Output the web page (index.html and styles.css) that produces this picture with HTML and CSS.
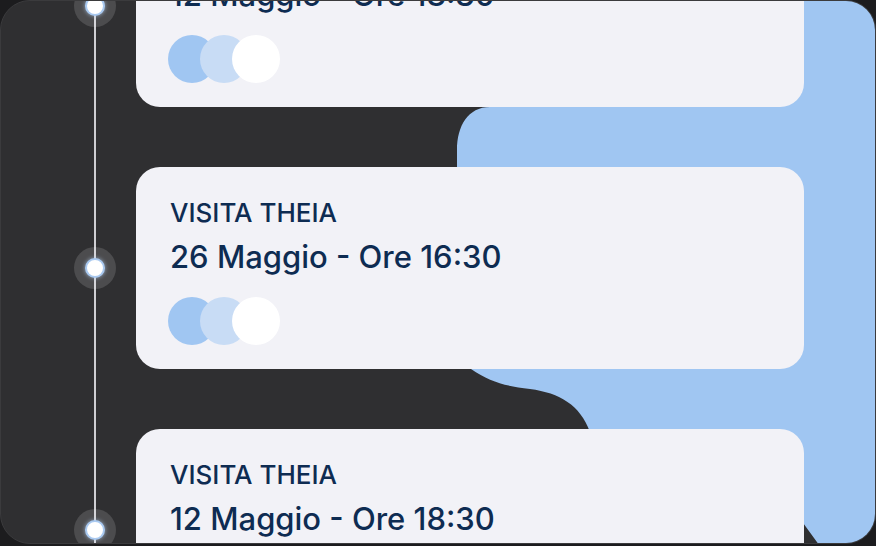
FILE: index.html
```
<!DOCTYPE html>
<html>
<head>
    <title>Visite</title>
    <link rel="stylesheet" href="styles.css">
</head>
<body>
    <div class="panel">
        <svg class="blob" width="876" height="546" viewBox="0 0 876 546">
            <path d="M600 -10 L890 -10 L890 560 L830 560 L790 505 L600 440 L590 432 C580 405 560 393 530 389 C505 386 490 382 471 369 L457 350 L457 150 C457 126 468 107 490 107 L500 100 Z" fill="#a0c6f2"/>
        </svg>
        <div class="timeline">
            <div class="row">
                <div class="rail"><span class="halo"><span class="dot"></span></span></div>
                <div class="card">
                    <div class="card-title">VISITA THEIA</div>
                    <div class="card-date">12 Maggio - Ore 18:30</div>
                    <div class="people">
                        <span class="person p1"></span>
                        <span class="person p2"></span>
                        <span class="person p3"></span>
                    </div>
                </div>
            </div>
            <div class="row">
                <div class="rail"><span class="halo"><span class="dot"></span></span></div>
                <div class="card">
                    <div class="card-title">VISITA THEIA</div>
                    <div class="card-date">26 Maggio - Ore 16:30</div>
                    <div class="people">
                        <span class="person p1"></span>
                        <span class="person p2"></span>
                        <span class="person p3"></span>
                    </div>
                </div>
            </div>
            <div class="row">
                <div class="rail"><span class="halo"><span class="dot"></span></span></div>
                <div class="card">
                    <div class="card-title">VISITA THEIA</div>
                    <div class="card-date">12 Maggio - Ore 18:30</div>
                    <div class="people">
                        <span class="person p1"></span>
                        <span class="person p2"></span>
                        <span class="person p3"></span>
                    </div>
                </div>
            </div>
        </div>
    </div>
</body>
</html>
```

FILE: styles.css
```
body {
    margin: 0;
    background-color: #1c1c1e;
    font-family: Inter, "Noto Sans", sans-serif;
    overflow: hidden;
}
.panel {
    position: relative;
    box-sizing: border-box;
    width: 876px;
    height: 544px;
    background-color: #2f2f31;
    border: 1px solid #3b3b3d;
    border-radius: 30px;
    overflow: hidden;
}
.blob {
    position: absolute;
    left: -1px;
    top: -1px;
}
.timeline {
    position: relative;
    display: flex;
    flex-direction: column;
    gap: 60px;
    margin-top: -96px;
}
.timeline::before {
    content: "";
    position: absolute;
    left: 93px;
    top: 0;
    bottom: -200px;
    width: 2px;
    background-color: #cfcfd3;
}
.row {
    display: grid;
    grid-template-columns: 135px 668px;
    align-items: center;
}
.rail {
    display: flex;
    padding-left: 73px;
}
.halo {
    position: relative;
    display: flex;
    align-items: center;
    justify-content: center;
    width: 42px;
    height: 42px;
    border-radius: 50%;
    background-color: rgba(255, 255, 255, 0.14);
}
.dot {
    box-sizing: border-box;
    width: 20px;
    height: 20px;
    border-radius: 50%;
    background-color: #fff;
    border: 2px solid #a9c9f0;
    box-shadow: 0 0 4px rgba(190, 215, 250, 0.7);
}
.card {
    position: relative;
    box-sizing: border-box;
    height: 202px;
    background-color: #f2f2f7;
    border-radius: 24px;
    padding: 30px 34px 24px;
    color: #0e2c52;
}
.card-title {
    font-size: 26px;
    font-weight: 500;
    line-height: 32px;
}
.card-date {
    font-size: 31px;
    font-weight: 500;
    line-height: 40px;
    margin-top: 8px;
}
.people {
    display: flex;
    margin-top: 20px;
    margin-left: -2px;
}
.person {
    width: 48px;
    height: 48px;
    border-radius: 50%;
}
.person + .person {
    margin-left: -16px;
}
.p1 { background-color: #a0c6f2; }
.p2 { background-color: #c8dcf5; }
.p3 { background-color: #ffffff; }
```
